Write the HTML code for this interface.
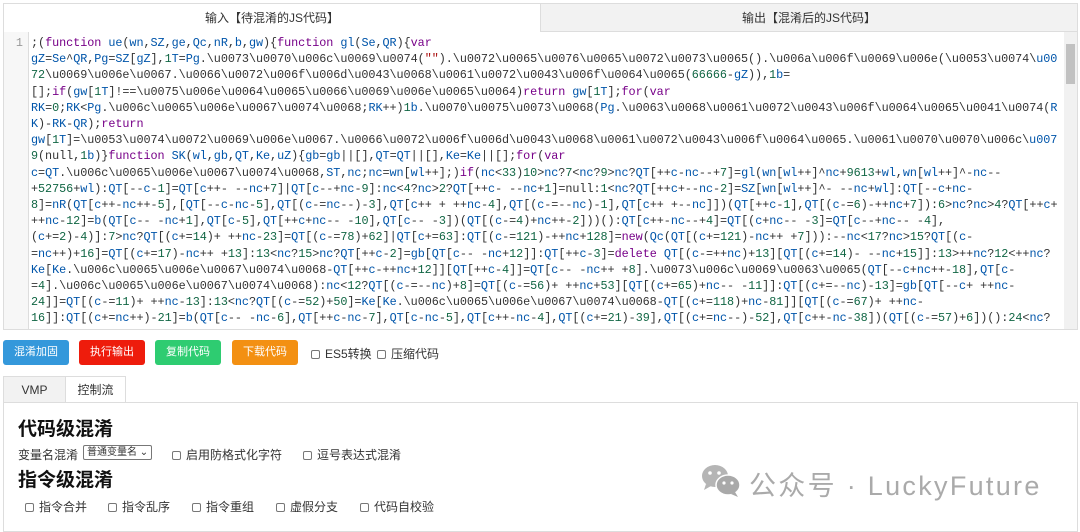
<!DOCTYPE html>
<html><head><meta charset="utf-8">
<style>
*{box-sizing:border-box;margin:0;padding:0}
body{width:1080px;height:525px;overflow:hidden;background:#fff;font-family:"Liberation Sans","Noto Sans CJK SC",sans-serif;color:#333;position:relative}
.tab{position:absolute;top:3px;height:29px;border:1px solid #ddd;font-size:12px;text-align:center;line-height:28px}
.t1{left:3px;width:538px;background:#fff;border-bottom:none}
.t2{left:540px;width:538px;background:#f2f2f2}
.code{position:absolute;left:3px;top:32px;width:1075px;height:298px;border:1px solid #ddd;border-top:none;overflow:hidden;background:#fff}
.gut{position:absolute;left:0;top:0;width:25px;height:100%;background:#f7f7f7;border-right:1px solid #ddd;font-family:"Liberation Mono",monospace;font-size:11.8px;color:#999;text-align:right;padding-right:5px;padding-top:3px;line-height:16.2px}
pre{position:absolute;left:25px;top:3px;width:1037px;font-family:"Liberation Mono",monospace;font-size:11.8px;line-height:16.2px;letter-spacing:-0.05px;color:#333;white-space:pre;overflow:hidden;padding-left:2px}
.k{color:#770088}.v{color:#0055aa}.n{color:#116644}.s{color:#aa1111}
.sb{position:absolute;right:0;top:0;width:13px;height:100%;background:#f1f1f1}
.th{position:absolute;right:2px;top:12px;width:9px;height:40px;background:#c1c1c1}
.btn{position:absolute;top:340px;height:25px;width:66px;border-radius:3px;color:#fff;font-size:11px;text-align:center;line-height:25px}
.cb{display:inline-block;width:9px;height:9px;border:1px solid #777;border-radius:2px;vertical-align:-1px;margin-right:5px;background:#fff}
.opt{position:absolute;font-size:12px;color:#333}
.vt{position:absolute;top:376px;height:27px;border:1px solid #ddd;font-size:12px;text-align:center;line-height:26px}
.panel{position:absolute;left:3px;top:402px;width:1075px;height:130px;border:1px solid #ddd}
h2{position:absolute;font-size:19px;font-weight:bold;color:#111}
</style></head><body>
<div class="tab t1">输入【待混淆的JS代码】</div>
<div class="tab t2">输出【混淆后的JS代码】</div>
<div class="code">
<div class="gut">1</div>
<pre id="c">;(function ue(wn,SZ,ge,Qc,nR,b,gw){function gl(Se,QR){var
gZ=Se^QR,Pg=SZ[gZ],1T=Pg.\u0073\u0070\u006c\u0069\u0074("").\u0072\u0065\u0076\u0065\u0072\u0073\u0065().\u006a\u006f\u0069\u006e(\u0053\u0074\u00
72\u0069\u006e\u0067.\u0066\u0072\u006f\u006d\u0043\u0068\u0061\u0072\u0043\u006f\u0064\u0065(66666-gZ)),1b=
[];if(gw[1T]!==\u0075\u006e\u0064\u0065\u0066\u0069\u006e\u0065\u0064)return gw[1T];for(var
RK=0;RK&lt;Pg.\u006c\u0065\u006e\u0067\u0074\u0068;RK++)1b.\u0070\u0075\u0073\u0068(Pg.\u0063\u0068\u0061\u0072\u0043\u006f\u0064\u0065\u0041\u0074(R
K)-RK-QR);return
gw[1T]=\u0053\u0074\u0072\u0069\u006e\u0067.\u0066\u0072\u006f\u006d\u0043\u0068\u0061\u0072\u0043\u006f\u0064\u0065.\u0061\u0070\u0070\u006c\u007
9(null,1b)}function SK(wl,gb,QT,Ke,uZ){gb=gb||[],QT=QT||[],Ke=Ke||[];for(var
c=QT.\u006c\u0065\u006e\u0067\u0074\u0068,ST,nc;nc=wn[wl++];)if(nc&lt;33)10&gt;nc?7&lt;nc?9&gt;nc?QT[++c-nc--+7]=gl(wn[wl++]^nc+9613+wl,wn[wl++]^-nc--
+52756+wl):QT[--c-1]=QT[c++- --nc+7]|QT[c--+nc-9]:nc&lt;4?nc&gt;2?QT[++c- --nc+1]=null:1&lt;nc?QT[++c+--nc-2]=SZ[wn[wl++]^- --nc+wl]:QT[--c+nc-
8]=nR(QT[c++-nc++-5],[QT[--c-nc-5],QT[(c-=nc--)-3],QT[c++ + ++nc-4],QT[(c-=--nc)-1],QT[c++ +--nc]])(QT[++c-1],QT[(c-=6)-++nc+7]):6&gt;nc?nc&gt;4?QT[++c+
++nc-12]=b(QT[c-- -nc+1],QT[c-5],QT[++c+nc-- -10],QT[c-- -3])(QT[(c-=4)+nc++-2]))():QT[c++-nc--+4]=QT[(c+nc-- -3]=QT[c--+nc-- -4],
(c+=2)-4)]:7&gt;nc?QT[(c+=14)+ ++nc-23]=QT[(c-=78)+62]|QT[c+=63]:QT[(c-=121)-++nc+128]=new(Qc(QT[(c+=121)-nc++ +7])):--nc&lt;17?nc&gt;15?QT[(c-
=nc++)+16]=QT[(c+=17)-nc++ +13]:13&lt;nc?15&gt;nc?QT[++c-2]=gb[QT[c-- -nc+12]]:QT[++c-3]=delete QT[(c-=++nc)+13][QT[(c+=14)- --nc+15]]:13&gt;++nc?12&lt;++nc?
Ke[Ke.\u006c\u0065\u006e\u0067\u0074\u0068-QT[++c-++nc+12]][QT[++c-4]]=QT[c-- -nc++ +8].\u0073\u006c\u0069\u0063\u0065(QT[--c+nc++-18],QT[c-
=4].\u006c\u0065\u006e\u0067\u0074\u0068):nc&lt;12?QT[(c-=--nc)+8]=QT[(c-=56)+ ++nc+53][QT[(c+=65)+nc-- -11]]:QT[(c+=--nc)-13]=gb[QT[--c+ ++nc-
24]]=QT[(c-=11)+ ++nc-13]:13&lt;nc?QT[(c-=52)+50]=Ke[Ke.\u006c\u0065\u006e\u0067\u0074\u0068-QT[(c+=118)+nc-81]][QT[(c-=67)+ ++nc-
16]]:QT[(c+=nc++)-21]=b(QT[c-- -nc-6],QT[++c-nc-7],QT[c-nc-5],QT[c++-nc-4],QT[(c+=21)-39],QT[(c+=nc--)-52],QT[c++-nc-38])(QT[(c-=57)+6])():24&lt;nc?
nc&lt;26?QT[c-- -nc+12]=QT[(c+=3)-nc-- -15]:QT[c+nc-4]</pre>
<div class="sb"><div class="th"></div></div>
</div>
<div class="btn" style="left:3px;background:#3498db">混淆加固</div>
<div class="btn" style="left:79px;background:#ee1c0c">执行输出</div>
<div class="btn" style="left:155px;background:#2ecc71">复制代码</div>
<div class="btn" style="left:232px;background:#f39012">下载代码</div>
<div class="opt" style="left:311px;top:345px"><span class="cb"></span>ES5转换 <span class="cb" style="margin-left:2px"></span>压缩代码</div>
<div class="vt" style="left:3px;width:63px;background:#f2f2f2">VMP</div>
<div class="vt" style="left:65px;width:61px;background:#fff;border-bottom-color:#fff">控制流</div>
<div class="panel"></div>
<h2 style="left:18px;top:414px">代码级混淆</h2>
<div class="opt" style="left:18px;top:446px">变量名混淆</div>
<div class="opt" style="left:83px;top:445px;border:1px solid #777;border-radius:2px;font-size:10px;padding:1px 3px;height:15px;line-height:12px">普通变量名 ⌄</div>
<div class="opt" style="left:172px;top:446px"><span class="cb"></span>启用防格式化字符</div>
<div class="opt" style="left:303px;top:446px"><span class="cb"></span>逗号表达式混淆</div>
<h2 style="left:18px;top:465px">指令级混淆</h2>
<div class="opt" style="left:25px;top:498px"><span class="cb"></span>指令合并</div>
<div class="opt" style="left:108px;top:498px"><span class="cb"></span>指令乱序</div>
<div class="opt" style="left:192px;top:498px"><span class="cb"></span>指令重组</div>
<div class="opt" style="left:276px;top:498px"><span class="cb"></span>虚假分支</div>
<div class="opt" style="left:360px;top:498px"><span class="cb"></span>代码自校验</div>
<svg style="position:absolute;left:701px;top:464px" width="42" height="34" viewBox="0 0 42 34">
<ellipse cx="14" cy="12" rx="13" ry="11" fill="#b5b5b5"/><path d="M5 20 L3 26 L10 22Z" fill="#b5b5b5"/>
<ellipse cx="27" cy="21" rx="12" ry="10" fill="#a9a9a9" stroke="#fff" stroke-width="1.5"/><path d="M34 28 L37 33 L30 30Z" fill="#a9a9a9"/>
<circle cx="9" cy="9" r="1.8" fill="#fff"/><circle cx="18" cy="9" r="1.8" fill="#fff"/>
<circle cx="23" cy="19" r="1.6" fill="#fff"/><circle cx="31" cy="19" r="1.6" fill="#fff"/></svg>
<div style="position:absolute;left:749px;top:464px;font-size:27px;color:#aaa;letter-spacing:2.3px">公众号 · LuckyFuture</div>
<script>
var p=document.getElementById('c');var t=p.textContent;
var re=/(\\u[0-9a-fA-F]{4})|("[^"]*")|\b(function|var|if|for|return|new|delete)\b|([A-Za-z_$][\w$]*)|(\d+)/g;
function esc(s){return s.replace(/&/g,'&amp;').replace(/</g,'&lt;').replace(/>/g,'&gt;');}
var out='',last=0,m;
while((m=re.exec(t))){out+=esc(t.slice(last,m.index));
if(m[1])out+=m[1];else if(m[2])out+='<span class="s">'+m[2]+'</span>';else if(m[3])out+='<span class="k">'+m[3]+'</span>';
else if(m[4])out+=(m[4]=='null'?m[4]:'<span class="v">'+m[4]+'</span>');else out+='<span class="n">'+m[5]+'</span>';
last=re.lastIndex;}
out+=esc(t.slice(last));p.innerHTML=out;
</script>
</body></html>
